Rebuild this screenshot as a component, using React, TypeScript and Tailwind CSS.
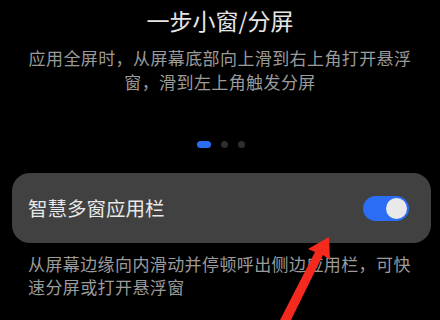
import React from "react";

export default function App() {
  const font = { fontFamily: '"Noto Sans CJK SC", "Noto Sans", sans-serif' };
  return (
    <div className="relative w-[440px] h-[320px] bg-black overflow-hidden" style={font}>
      <div className="pt-[5px] text-center text-[23px] leading-[30px] text-[#e6e6e6]">一步小窗/分屏</div>
      <div className="mt-[11px] text-center text-[17px] leading-[24px] tracking-[0.4px] text-[#9b9b9b]">
        应用全屏时，从屏幕底部向上滑到右上角打开悬浮
        <br />
        窗，滑到左上角触发分屏
      </div>
      <div className="mt-[47px] flex items-center justify-center gap-[10px] pl-[2px]">
        <div className="w-[14px] h-[7px] rounded-full bg-[#2b6df5]" />
        <div className="w-[7px] h-[7px] rounded-full bg-[#2e2e2e]" />
        <div className="w-[7px] h-[7px] rounded-full bg-[#2e2e2e]" />
      </div>
      <div className="mt-[25px] ml-[12px] w-[419px] h-[70px] rounded-[18px] bg-[#414141] flex items-center justify-between pl-[16px] pr-[22px]">
        <span className="text-[19.5px] leading-[28px] text-[#e8e8e8]">智慧多窗应用栏</span>
        <div className="w-[46px] h-[25px] rounded-full bg-[#2b6df5] flex items-center justify-end pr-[2px]">
          <div className="w-[21px] h-[21px] rounded-full bg-[#e9e9e9]" />
        </div>
      </div>
      <div className="mt-[9px] pl-[28px] text-[17px] leading-[23px] tracking-[0.4px] text-[#9b9b9b]">
        从屏幕边缘向内滑动并停顿呼出侧边应用栏，可快
        <br />
        速分屏或打开悬浮窗
      </div>
      <svg className="absolute left-0 top-0" width="440" height="320" viewBox="0 0 440 320">
        <polygon
          points="329,237 330,260 323,255 290,322 279,322 315,252 308,249"
          fill="#f42a1e"
        />
      </svg>
    </div>
  );
}
